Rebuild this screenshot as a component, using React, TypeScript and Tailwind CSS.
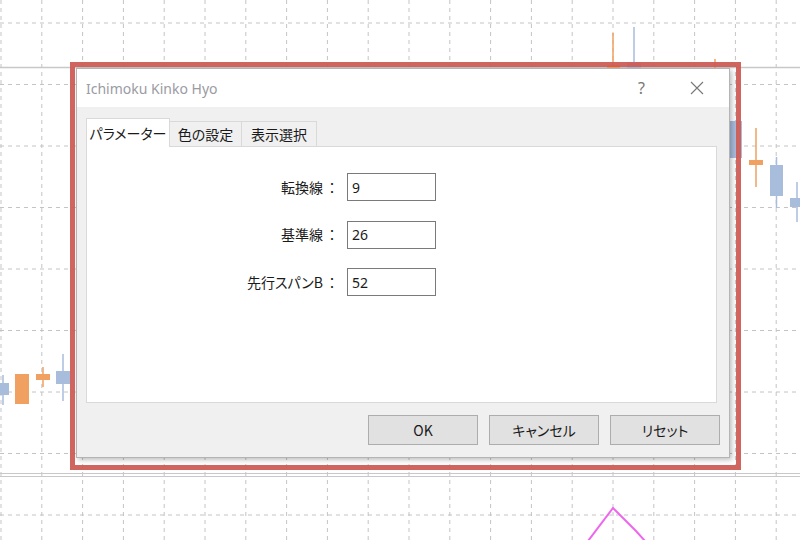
import React from "react";

const vLines = Array.from({ length: 20 }, (_, k) => 1 + 40.8 * k);
const hLines = Array.from({ length: 9 }, (_, k) => 23 + 61.5 * k);

const ORANGE = "#f0a060";
const BLUE = "#a8bcdc";

function Chart() {
  return (
    <svg className="absolute inset-0" width={800} height={540} viewBox="0 0 800 540">
      {vLines.map((x) => (
        <line key={"v" + x} x1={x} y1={0} x2={x} y2={540} stroke="#c4c4c4" strokeWidth={1} strokeDasharray="4 4" />
      ))}
      {hLines.map((y) => (
        <line key={"h" + y} x1={0} y1={y} x2={800} y2={y} stroke="#c4c4c4" strokeWidth={1} strokeDasharray="4 4" />
      ))}
      <line x1={0} y1={67.5} x2={800} y2={67.5} stroke="#c8c8c8" strokeWidth={1.5} />
      <line x1={0} y1={473.5} x2={800} y2={473.5} stroke="#c8c8c8" strokeWidth={1} />
      <line x1={0} y1={476.5} x2={800} y2={476.5} stroke="#c8c8c8" strokeWidth={1} />

      {/* top candles */}
      <line x1={613} y1={33} x2={613} y2={68} stroke={ORANGE} strokeWidth={1.5} />
      <rect x={607} y={65} width={13} height={4} fill={ORANGE} />
      <line x1={634} y1={27} x2={634} y2={62} stroke={BLUE} strokeWidth={1.5} />
      <rect x={627} y={62} width={14} height={8} fill={BLUE} />
      <line x1={715} y1={59} x2={715} y2={68} stroke={ORANGE} strokeWidth={1.5} />

      {/* right candles */}
      <rect x={729} y={121} width={13} height={37} fill={BLUE} />
      <line x1={756} y1={128} x2={756} y2={187} stroke={ORANGE} strokeWidth={1.5} />
      <rect x={749} y={160} width={14} height={5} fill={ORANGE} />
      <line x1={776.5} y1={157} x2={776.5} y2={208} stroke={BLUE} strokeWidth={1.5} />
      <rect x={770} y={165} width={13} height={31} fill={BLUE} />
      <line x1={797} y1={182} x2={797} y2={222} stroke={BLUE} strokeWidth={1.5} />
      <rect x={790} y={198} width={12} height={9} fill={BLUE} />

      {/* left candles */}
      <line x1={3} y1={375} x2={3} y2={405} stroke={BLUE} strokeWidth={1.5} />
      <rect x={0} y={383} width={9} height={12} fill={BLUE} />
      <rect x={15} y={374} width={14} height={30} fill={ORANGE} />
      <line x1={43} y1={367} x2={43} y2={387} stroke={ORANGE} strokeWidth={1.5} />
      <rect x={36} y={374} width={14} height={6} fill={ORANGE} />
      <line x1={63} y1={354} x2={63} y2={401} stroke={BLUE} strokeWidth={1.5} />
      <rect x={56} y={371} width={14} height={13} fill={BLUE} />

      {/* pink line */}
      <polyline points="588,541 613,508 636,531 645,541" fill="none" stroke="#ee66ee" strokeWidth={2} />
    </svg>
  );
}

const jpFont = "[font-family:'Noto_Sans_CJK_JP','Noto_Sans',sans-serif]";
const jp = `${jpFont} [font-feature-settings:'palt']`;

function Field({ label, value }: { label: string; value: string }) {
  return (
    <div className="flex items-center h-[28px]">
      <div className={`w-[253px] flex justify-end text-[14px] text-[#1a1a1a] pr-[1px] ${jpFont}`}>
        <span className="[font-feature-settings:'palt']">{label}</span>
        <span className="ml-[2px]">：</span>
      </div>
      <div className="ml-[7px] w-[89px] h-[28px] border border-[#7a7a7a] bg-white flex items-center px-[4px] text-[14px] text-[#1a1a1a] [font-family:'Noto_Sans',sans-serif]">
        {value}
      </div>
    </div>
  );
}

function Btn({ children }: { children: React.ReactNode }) {
  return (
    <div className={`w-[110px] h-[30px] bg-[#e1e1e1] border border-[#adadad] flex items-center justify-center text-[14px] text-[#1a1a1a] ${jp}`}>
      {children}
    </div>
  );
}

function Dialog() {
  return (
    <div className="absolute left-[76px] top-[68px] w-[654px] h-[390px] border border-[#b4b4b4] bg-[#f0f0f0] shadow-[2px_2px_5px_rgba(0,0,0,0.25)] flex flex-col">
      <div className="h-[38px] bg-white flex items-center shrink-0">
        <div className="ml-[9px] text-[14px] text-[#9b9ba3] [font-family:'Noto_Sans',sans-serif]">Ichimoku Kinko Hyo</div>
        <div className="ml-auto mr-[45px] text-[16px] text-[#777] [font-family:'Noto_Sans',sans-serif]">?</div>
        <svg width={14} height={14} viewBox="0 0 14 14" className="mr-[25px]">
          <path d="M1 1 L13 13 M13 1 L1 13" stroke="#777" strokeWidth={1.1} fill="none" />
        </svg>
      </div>
      <div className="flex flex-col pl-[9px] pt-[11px]">
        <div className="flex items-end h-[29px] relative z-10 -mb-px">
          <div className={`w-[84px] h-[29px] bg-white border border-b-0 border-[#d9d9d9] flex items-center justify-center text-[14px] text-[#1a1a1a] ${jp}`}>
            パラメーター
          </div>
          <div className={`w-[72px] h-[26px] bg-[#f0f0f0] border border-[#d9d9d9] border-l-0 flex items-center justify-center text-[14px] text-[#1a1a1a] ${jp}`}>
            色の設定
          </div>
          <div className={`w-[75px] h-[26px] bg-[#f0f0f0] border border-[#d9d9d9] border-l-0 flex items-center justify-center text-[14px] text-[#1a1a1a] ${jp}`}>
            表示選択
          </div>
        </div>
        <div className="w-[631px] h-[257px] bg-white border border-[#d9d9d9] pt-[26px] flex flex-col gap-[19.5px]">
          <Field label="転換線" value="9" />
          <Field label="基準線" value="26" />
          <Field label="先行スパンB" value="52" />
        </div>
        <div className="w-[634px] mt-[12px] flex justify-end gap-[11px]">
          <Btn>OK</Btn>
          <Btn>キャンセル</Btn>
          <Btn>リセット</Btn>
        </div>
      </div>
    </div>
  );
}

export default function App() {
  return (
    <div className="relative w-[800px] h-[540px] bg-white overflow-hidden">
      <Chart />
      <Dialog />
      <div className="absolute left-[70px] top-[62px] w-[671px] h-[408px] border-[5px] border-[#cd5c55] opacity-95" />
    </div>
  );
}
